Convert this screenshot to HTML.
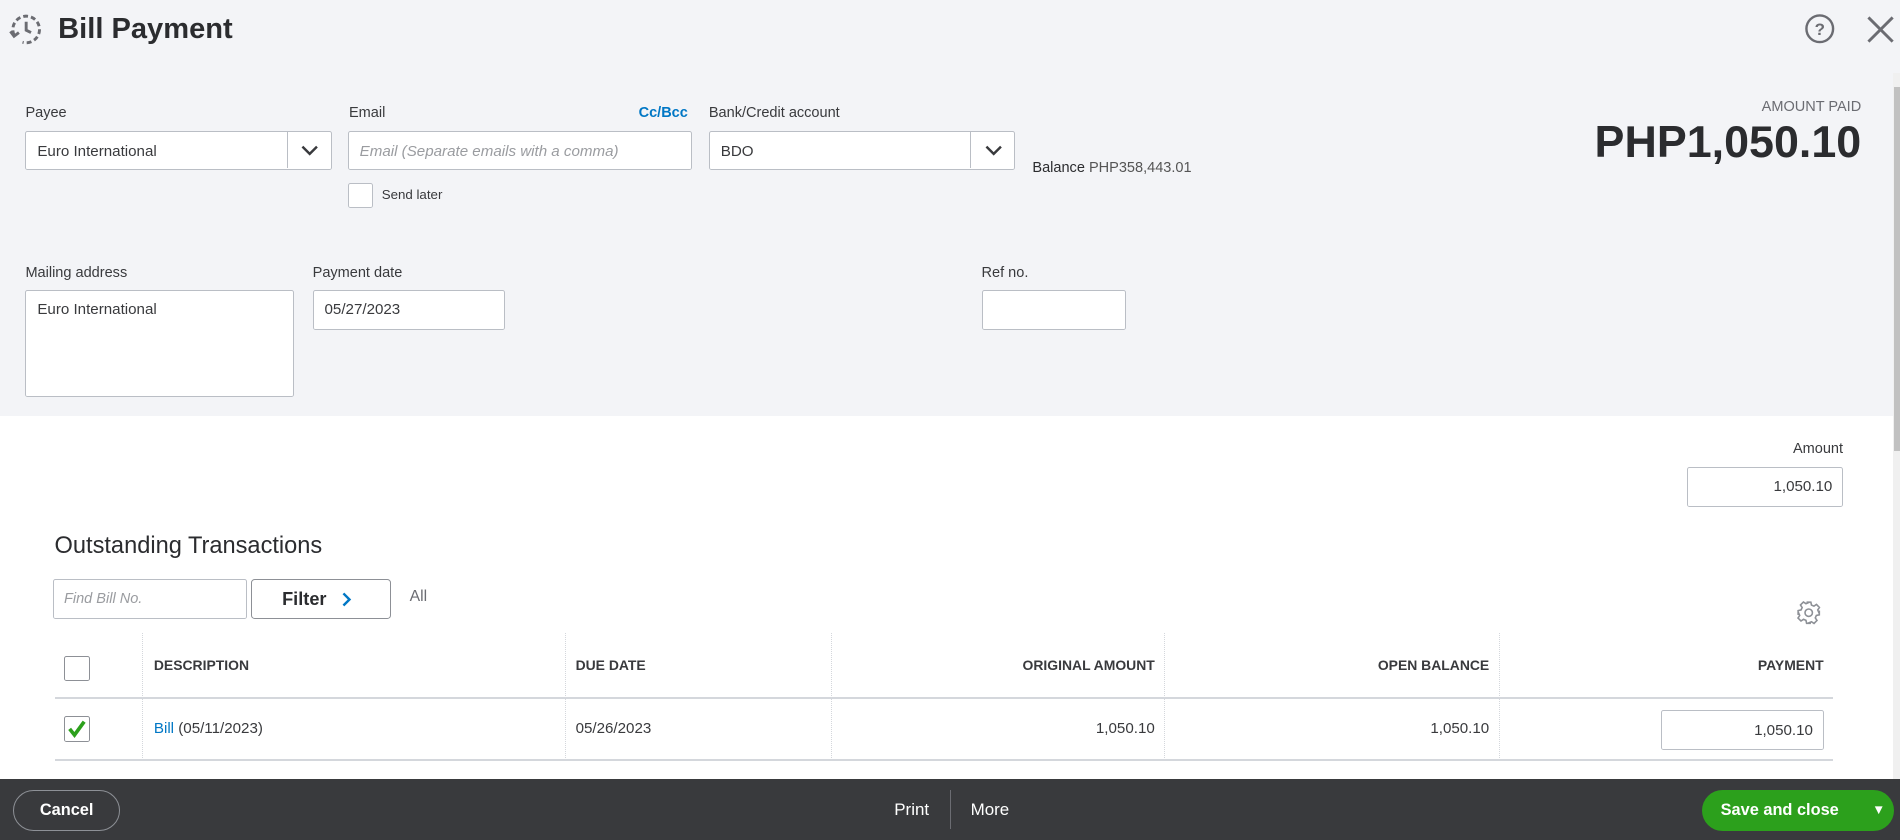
<!DOCTYPE html>
<html><head><meta charset="utf-8"><style>
html,body{margin:0;padding:0;overflow:hidden;background:#fff}
body{width:1900px;height:840px}
#w{zoom:1.21173;width:1568px;height:693px;position:relative;font-family:"Liberation Sans",Arial,sans-serif;color:#393a3d;font-size:12.5px}
.a{position:absolute}
.top{left:0;top:0;width:1568px;height:343px;background:#f3f4f7}
.lbl{font-size:12px;color:#393a3d}
.inp{background:#fff;border:1px solid #babec5;border-radius:2px;box-sizing:border-box}
.th{font-weight:bold;font-size:11.5px;color:#393a3d}
.vl{border-left:1px dotted #d4d7dc}
</style></head><body><div id="w">
<div class="a top"></div>
<div class="a" style="left:1562px;top:60px;width:6px;height:583px;background:#f0f0f0"></div>
<div class="a" style="left:1563px;top:72px;width:5px;height:300px;background:#c1c1c1"></div>
<svg class="a" style="left:7px;top:10px" width="30" height="30" viewBox="0 0 30 30" fill="none" stroke="#6b6c72" stroke-width="2.4"><path d="M5 19 A11 11 0 1 1 12 25" stroke-dasharray="4 2.5"/><path d="M15 8 V15 L19 17"/><path d="M2 16 L5 20 L9 17"/></svg>
<div class="a" style="left:48px;top:11px;font-size:24px;font-weight:bold;color:#2b2c2f">Bill Payment</div>
<svg class="a" style="left:1489px;top:11px" width="26" height="26" viewBox="0 0 26 26" fill="none" stroke="#6b6c72" stroke-width="2"><circle cx="13" cy="13" r="11"/><text x="13" y="18" text-anchor="middle" font-size="14" font-weight="bold" fill="#6b6c72" stroke="none" font-family="Liberation Sans">?</text></svg>
<svg class="a" style="left:1540px;top:12px" width="24" height="24" viewBox="0 0 24 24" stroke="#6b6c72" stroke-width="2.4"><path d="M2 2L22 22M22 2L2 22"/></svg>

<div class="a lbl" style="left:21px;top:87px">Payee</div>
<div class="a inp" style="left:21px;top:108px;width:253px;height:32px"><span class="a" style="left:9px;top:9px">Euro International</span><div class="a" style="left:215px;top:0;height:30px;border-left:1px solid #babec5"></div><svg class="a" style="left:226px;top:9px" width="16" height="12"><path d="M2 3L8 9L14 3" fill="none" stroke="#393a3d" stroke-width="2"/></svg></div>
<div class="a lbl" style="left:288px;top:87px">Email</div>
<div class="a" style="left:527px;top:87px;font-size:12px;color:#0077c5;font-weight:bold">Cc/Bcc</div>
<div class="a inp" style="left:287px;top:108px;width:284px;height:32px"><span class="a" style="left:9px;top:9px;font-style:italic;color:#9a9ca0">Email (Separate emails with a comma)</span></div>
<div class="a inp" style="left:287px;top:151px;width:21px;height:21px"></div>
<div class="a" style="left:315px;top:154px;font-size:11px">Send later</div>
<div class="a lbl" style="left:585px;top:87px">Bank/Credit account</div>
<div class="a inp" style="left:585px;top:108px;width:253px;height:32px"><span class="a" style="left:9px;top:9px">BDO</span><div class="a" style="left:215px;top:0;height:30px;border-left:1px solid #babec5"></div><svg class="a" style="left:226px;top:9px" width="16" height="12"><path d="M2 3L8 9L14 3" fill="none" stroke="#393a3d" stroke-width="2"/></svg></div>
<div class="a" style="left:852px;top:132px;font-size:12px"><span style="color:#2b2c2f">Balance</span> <span style="color:#555">PHP358,443.01</span></div>
<div class="a" style="right:32px;top:82px;font-size:12px;color:#6b6c72">AMOUNT PAID</div>
<div class="a" style="right:32px;top:96px;font-size:37px;font-weight:bold;color:#2b2c2f">PHP1,050.10</div>

<div class="a lbl" style="left:21px;top:219px">Mailing address</div>
<div class="a inp" style="left:21px;top:239px;width:222px;height:89px"><span class="a" style="left:9px;top:9px">Euro International</span></div>
<div class="a lbl" style="left:258px;top:219px">Payment date</div>
<div class="a inp" style="left:258px;top:239px;width:159px;height:33px"><span class="a" style="left:9px;top:9px">05/27/2023</span></div>
<div class="a lbl" style="left:810px;top:219px">Ref no.</div>
<div class="a inp" style="left:810px;top:239px;width:119px;height:33px"></div>

<div class="a lbl" style="right:47px;top:364px">Amount</div>
<div class="a inp" style="left:1392px;top:385px;width:129px;height:33px"><span class="a" style="right:8px;top:9px">1,050.10</span></div>

<div class="a" style="left:45px;top:440px;font-size:19.5px;color:#2b2c2f">Outstanding Transactions</div>
<div class="a inp" style="left:44px;top:478px;width:160px;height:33px"><span class="a" style="left:8px;top:9px;font-style:italic;color:#9a9ca0;font-size:12px">Find Bill No.</span></div>
<div class="a" style="left:207px;top:478px;width:116px;height:33px;box-sizing:border-box;border:1px solid #8d9096;border-radius:3px;background:#fff"><span class="a" style="left:25px;top:7px;font-size:15px;font-weight:bold;color:#2b2c2f">Filter</span><svg class="a" style="left:74px;top:9px" width="10" height="14"><path d="M2 2L7 7L2 12" fill="none" stroke="#0077c5" stroke-width="2"/></svg></div>
<div class="a" style="left:338px;top:485px;font-size:13px;color:#6b6c72">All</div>
<svg class="a" style="left:1482px;top:495px" width="21" height="21" viewBox="0 0 24 24" fill="none" stroke="#8d9096" stroke-width="1.5"><circle cx="12" cy="12" r="3.5"/><path d="M10 2h4l.6 2.8 2.3 1 2.4-1.6 2.8 2.8-1.6 2.4 1 2.3L22 10v4l-2.8.6-1 2.3 1.6 2.4-2.8 2.8-2.4-1.6-2.3 1L14 22h-4l-.6-2.8-2.3-1-2.4 1.6-2.8-2.8 1.6-2.4-1-2.3L2 14v-4l2.8-.6 1-2.3-1.6-2.4 2.8-2.8 2.4 1.6 2.3-1z"/></svg>

<div class="a" style="left:45px;top:575px;width:1468px;height:2px;background:#d4d7dc"></div>
<div class="a" style="left:45px;top:626px;width:1468px;height:2px;background:#d4d7dc"></div>
<div class="a vl" style="left:117px;top:522px;height:105px"></div>
<div class="a vl" style="left:466px;top:522px;height:105px"></div>
<div class="a vl" style="left:686px;top:522px;height:105px"></div>
<div class="a vl" style="left:961px;top:522px;height:105px"></div>
<div class="a vl" style="left:1237px;top:522px;height:105px"></div>
<div class="a inp" style="left:53px;top:541px;width:21px;height:21px;border-color:#8d9096"></div>
<div class="a th" style="left:127px;top:542px">DESCRIPTION</div>
<div class="a th" style="left:475px;top:542px">DUE DATE</div>
<div class="a th" style="right:615px;top:542px">ORIGINAL AMOUNT</div>
<div class="a th" style="right:339px;top:542px">OPEN BALANCE</div>
<div class="a th" style="right:63px;top:542px">PAYMENT</div>
<div class="a inp" style="left:53px;top:591px;width:21px;height:21px;border-color:#8d9096"><svg class="a" style="left:1px;top:1px" width="18" height="18"><path d="M3 9L7 14L15 3" fill="none" stroke="#2ca01c" stroke-width="3"/></svg></div>
<div class="a" style="left:127px;top:594px"><span style="color:#0077c5">Bill</span> (05/11/2023)</div>
<div class="a" style="left:475px;top:594px">05/26/2023</div>
<div class="a" style="right:615px;top:594px">1,050.10</div>
<div class="a" style="right:339px;top:594px">1,050.10</div>
<div class="a inp" style="left:1371px;top:586px;width:134px;height:33px"><span class="a" style="right:8px;top:9px">1,050.10</span></div>

<div class="a" style="left:0;top:643px;width:1568px;height:50px;background:#393a3d"></div>
<div class="a" style="left:11px;top:652px;width:88px;height:34px;box-sizing:border-box;border:1px solid #8d9096;border-radius:18px;color:#fff;font-weight:bold;font-size:13.5px;text-align:center;line-height:32px">Cancel</div>
<div class="a" style="left:738px;top:660px;color:#fff;font-size:14px">Print</div>
<div class="a" style="left:784px;top:652px;height:32px;border-left:1px solid #6b6c72"></div>
<div class="a" style="left:801px;top:660px;color:#fff;font-size:14px">More</div>
<div class="a" style="left:1405px;top:652px;width:158px;height:34px;background:#2ca01c;border-radius:18px"><span class="a" style="left:15px;top:9px;color:#fff;font-weight:bold;font-size:13.5px">Save and close</span><span class="a" style="left:140px;top:10px;color:#fff;font-size:11px">▼</span></div>
</div></body></html>
